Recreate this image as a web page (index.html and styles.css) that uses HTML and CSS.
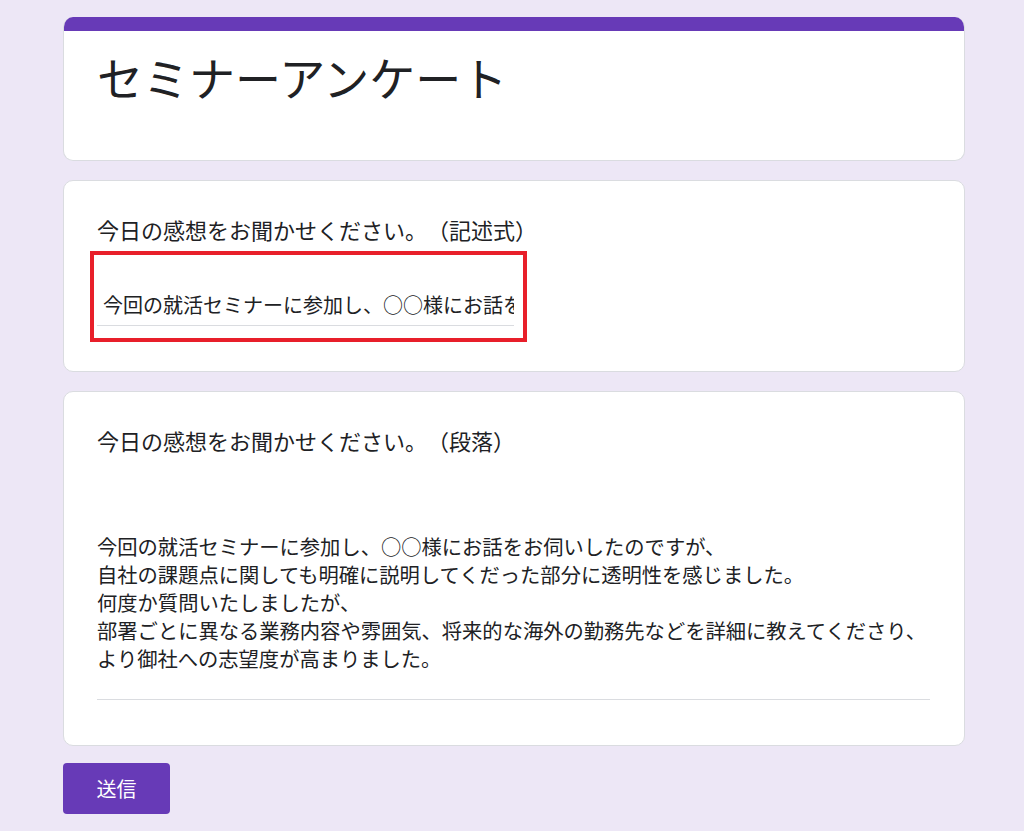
FILE: index.html
```html
<!DOCTYPE html>
<html lang="ja">
<head>
<meta charset="utf-8">
<title>セミナーアンケート</title>
<link rel="stylesheet" href="styles.css">
</head>
<body>
<main class="form">
  <section class="card card-head">
    <div class="head-bar"></div>
    <h1 class="title">セミナーアンケート</h1>
  </section>

  <section class="card card-q card-short">
    <h2 class="question">今日の感想をお聞かせください。（記述式）</h2>
    <div class="highlight">
      <input class="short-input" type="text" readonly value="今回の就活セミナーに参加し、○○様にお話をお伺いしたのですが、">
    </div>
  </section>

  <section class="card card-q card-para">
    <h2 class="question">今日の感想をお聞かせください。（段落）</h2>
    <div class="para-input">
      <p class="para-line">今回の就活セミナーに参加し、○○様にお話をお伺いしたのですが、</p>
      <p class="para-line">自社の課題点に関しても明確に説明してくだった部分に透明性を感じました。</p>
      <p class="para-line">何度か質問いたしましたが、</p>
      <p class="para-line">部署ごとに異なる業務内容や雰囲気、将来的な海外の勤務先などを詳細に教えてくださり、</p>
      <p class="para-line">より御社への志望度が高まりました。</p>
    </div>
  </section>

  <div class="actions">
    <button class="submit" type="button">送信</button>
  </div>
</main>
</body>
</html>
```

FILE: styles.css
```css
* {
  box-sizing: border-box;
}

html, body {
  margin: 0;
  padding: 0;
  background: #ede7f6;
}

body {
  font-family: "Noto Sans CJK JP", "Noto Sans", sans-serif;
  color: #202124;
  height: 831px;
  overflow: hidden;
  text-spacing-trim: space-all;
}

.form {
  width: 902px;
  margin: 17px 0 0 63px;
  display: flex;
  flex-direction: column;
  gap: 19px;
}

.card {
  background: #ffffff;
  border: 1px solid #dadce0;
  border-radius: 10px;
  overflow: hidden;
  padding: 0 34px 0 33px;
}

.card-head {
  padding-top: 0;
  padding-bottom: 55px;
  border-top: none;
}

.head-bar {
  height: 14px;
  background: #673ab7;
  margin: 0 -35px 17px -34px;
}

.title {
  margin: 0;
  font-size: 46px;
  line-height: 57px;
  font-weight: 400;
  color: #202124;
}

.card-q {
  padding-top: 32px;
}

.card-short {
  padding-bottom: 29px;
}

.question {
  margin: 0;
  font-size: 22px;
  line-height: 32px;
  font-weight: 400;
  color: #202124;
}

.highlight {
  margin: 6px 0 0 -7px;
  width: 437px;
  border: 4px solid #e81f2a;
  padding: 35px 9px 12px 3px;
}

.short-input {
  display: block;
  width: 100%;
  border: none;
  border-bottom: 1px solid #dadce0;
  padding: 0 0 6px 6px;
  margin: 0;
  font-family: "Noto Sans CJK JP", "Noto Sans", sans-serif;
  font-size: 20px;
  line-height: 29px;
  height: 36px;
  color: #202124;
  background: transparent;
  outline: none;
}

.card-para {
  padding-bottom: 45px;
}

.para-input {
  margin-top: 76px;
  border-bottom: 1px solid #dadce0;
  padding-bottom: 27px;
}

.para-line {
  margin: 0;
  font-size: 20.3px;
  line-height: 28px;
  color: #202124;
  white-space: nowrap;
}

.actions {
  margin-top: -2px;
}

.submit {
  width: 107px;
  height: 51px;
  border: none;
  border-radius: 4px;
  background: #673ab7;
  color: #ffffff;
  font-family: "Noto Sans CJK JP", "Noto Sans", sans-serif;
  font-size: 20px;
  padding: 0;
  cursor: pointer;
}
```
